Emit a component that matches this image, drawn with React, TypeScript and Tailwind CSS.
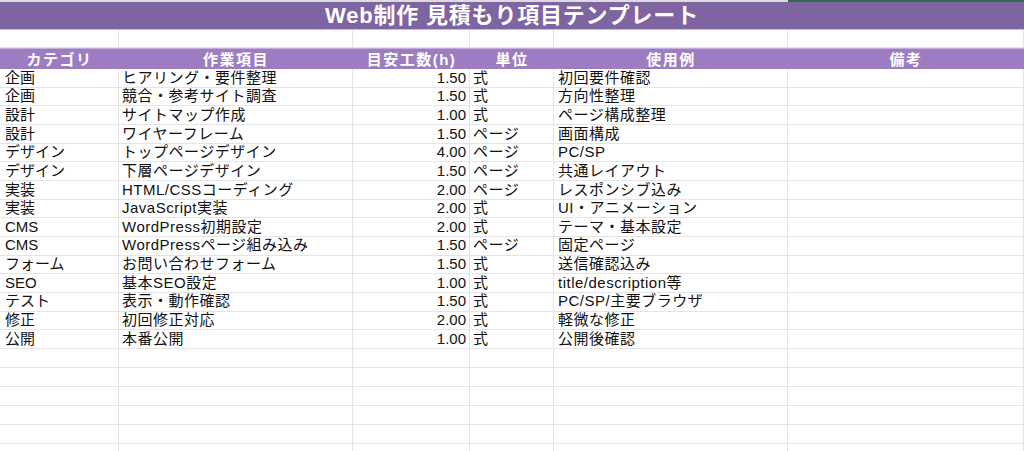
const rows: [string, string, string, string, string][] = [
  ["企画", "ヒアリング・要件整理", "1.50", "式", "初回要件確認"],
  ["企画", "競合・参考サイト調査", "1.50", "式", "方向性整理"],
  ["設計", "サイトマップ作成", "1.00", "式", "ページ構成整理"],
  ["設計", "ワイヤーフレーム", "1.50", "ページ", "画面構成"],
  ["デザイン", "トップページデザイン", "4.00", "ページ", "PC/SP"],
  ["デザイン", "下層ページデザイン", "1.50", "ページ", "共通レイアウト"],
  ["実装", "HTML/CSSコーディング", "2.00", "ページ", "レスポンシブ込み"],
  ["実装", "JavaScript実装", "2.00", "式", "UI・アニメーション"],
  ["CMS", "WordPress初期設定", "2.00", "式", "テーマ・基本設定"],
  ["CMS", "WordPressページ組み込み", "1.50", "ページ", "固定ページ"],
  ["フォーム", "お問い合わせフォーム", "1.50", "式", "送信確認込み"],
  ["SEO", "基本SEO設定", "1.00", "式", "title/description等"],
  ["テスト", "表示・動作確認", "1.50", "式", "PC/SP/主要ブラウザ"],
  ["修正", "初回修正対応", "2.00", "式", "軽微な修正"],
  ["公開", "本番公開", "1.00", "式", "公開後確認"],
];

const headers = ["カテゴリ", "作業項目", "目安工数(h)", "単位", "使用例", "備考"];

const cols = "grid grid-cols-[119px_234px_117px_84px_234px_1fr]";
const cell = "border-r border-b border-[#e4e4e4] flex items-center overflow-hidden whitespace-nowrap";

export default function App() {
  return (
    <div
      className="w-[1024px] h-[451px] overflow-hidden bg-white text-[#111]"
      style={{ fontFamily: '"Liberation Sans", "Noto Sans CJK JP", sans-serif' }}
    >
      {/* selection strip at top */}
      <div className="flex h-[2px]">
        <div className="w-[788px] bg-[#dcdcdc]" />
        <div className="flex-1 bg-[#2f6b50]" />
      </div>

      {/* title */}
      <div className="h-[28px] bg-[#7e64a0] flex items-center justify-center text-white font-bold text-[22px] tracking-[0.8px] border-b border-[#c9bbdb]">
        Web制作 見積もり項目テンプレート
      </div>

      {/* blank row */}
      <div className={`${cols} h-[18px]`}>
        {headers.map((h) => (
          <div key={h} className={cell} />
        ))}
      </div>

      {/* header row */}
      <div className={`${cols} h-[21px] bg-[#9d7cc1] border-t border-[#c3add9]`}>
        {headers.map((h) => (
          <div
            key={h}
            className="flex items-center justify-center text-white font-bold text-[15px] tracking-[1.5px]"
          >
            {h}
          </div>
        ))}
      </div>

      {/* data rows */}
      {rows.map((r, i) => (
        <div key={i} className={`${cols} h-[18.67px] text-[15px]`}>
          <div className={`${cell} pl-[5px]`}>{r[0]}</div>
          <div className={`${cell} pl-[3px] tracking-[0.5px]`}>{r[1]}</div>
          <div className={`${cell} justify-end pr-[3px]`}>{r[2]}</div>
          <div className={`${cell} pl-[3px] tracking-[0.5px]`}>{r[3]}</div>
          <div className={`${cell} pl-[4px] tracking-[0.5px]`}>{r[4]}</div>
          <div className={cell} />
        </div>
      ))}

      {/* empty rows */}
      {[0, 1, 2, 3, 4, 5].map((i) => (
        <div key={i} className={`${cols} h-[19px]`}>
          {headers.map((h) => (
            <div key={h} className={cell} />
          ))}
        </div>
      ))}
    </div>
  );
}
